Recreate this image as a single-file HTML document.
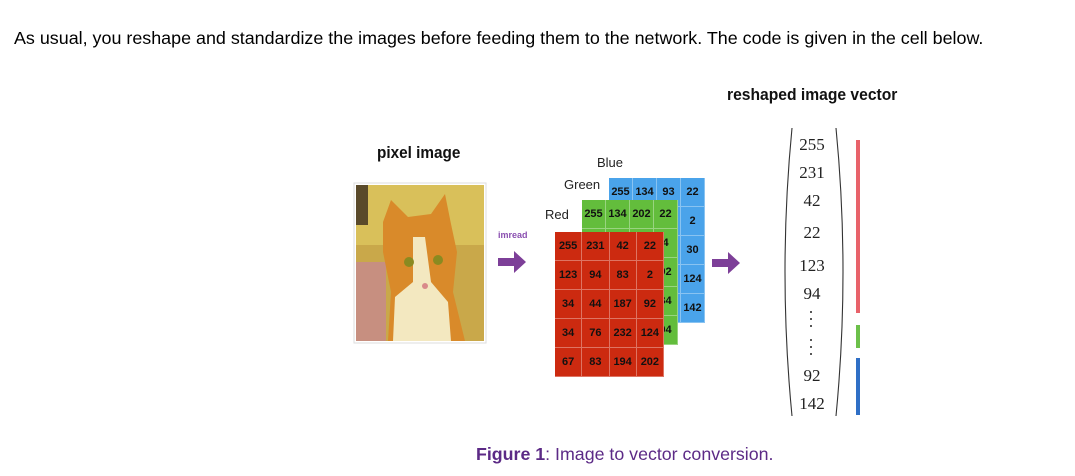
<!DOCTYPE html>
<html><head><style>
body{margin:0;width:1075px;height:476px;background:#fff;position:relative;font-family:"Liberation Sans",sans-serif;overflow:hidden}
.a{position:absolute;white-space:nowrap}
.g{position:absolute;display:grid;font-weight:bold;font-size:11px;color:#111}
.g div{display:flex;align-items:center;justify-content:center;border-right:1px solid rgba(255,255,255,.35);border-bottom:1px solid rgba(255,255,255,.35)}
.v{position:absolute;left:790px;width:44px;text-align:center;font-family:"Liberation Serif",serif;font-size:17px;color:#222}
.d{position:absolute;left:810px;width:2px;height:2px;background:#222;border-radius:1px}
</style></head><body>
<div class="a" style="left:14px;top:28px;font-size:17.9px;color:#000">As usual, you reshape and standardize the images before feeding them to the network. The code is given in the cell below.</div>
<div class="a" style="left:727px;top:85px;font-size:17px;font-weight:bold;color:#111;transform:scaleX(.92);transform-origin:left">reshaped image vector</div>
<div class="a" style="left:377px;top:143px;font-size:17px;font-weight:bold;color:#111;transform:scaleX(.9);transform-origin:left">pixel image</div>
<svg class="a" style="left:353px;top:182px" width="134" height="162">
<rect x="1" y="1" width="132" height="160" fill="#fff" stroke="#ddd"/>
<rect x="3" y="3" width="128" height="156" fill="#c9a84a"/>
<rect x="3" y="3" width="128" height="60" fill="#d9c05a"/>
<rect x="3" y="80" width="30" height="79" fill="#c78f80"/>
<rect x="3" y="3" width="12" height="40" fill="#5a4a2a"/>
<path d="M30 40 L38 18 L55 35 L78 32 L92 12 L98 42 L104 70 L100 110 L112 159 L35 159 L38 110 L30 70Z" fill="#d98a2a"/>
<path d="M60 55 L72 55 L78 100 L95 120 L98 159 L40 159 L42 115 L60 100Z" fill="#f3e8c0"/>
<circle cx="56" cy="80" r="5" fill="#8a8a20"/><circle cx="85" cy="78" r="5" fill="#8a8a20"/>
<circle cx="72" cy="104" r="3" fill="#d98a8a"/>
</svg>
<div class="a" style="left:498px;top:230px;font-size:9px;font-weight:bold;color:#8a4fb0">imread</div>
<svg class="a" style="left:498px;top:251px" width="30" height="22"><path d="M0 7h16V0l12 11-12 11v-7H0z" fill="#7d3f98"/></svg>
<svg class="a" style="left:712px;top:252px" width="30" height="22"><path d="M0 7h16V0l12 11-12 11v-7H0z" fill="#7d3f98"/></svg>
<div class="a" style="left:597px;top:155px;font-size:13px;color:#222">Blue</div>
<div class="a" style="left:564px;top:177px;font-size:13px;color:#222">Green</div>
<div class="a" style="left:545px;top:207px;font-size:13px;color:#222">Red</div>
<div class="g" style="left:609px;top:178px;width:96px;height:145px;background:#4aa3ea;grid-template-columns:repeat(4,1fr);grid-template-rows:repeat(5,1fr)">
<div>255</div><div>134</div><div>93</div><div>22</div><div></div><div></div><div></div><div>2</div><div></div><div></div><div></div><div>30</div><div></div><div></div><div></div><div>124</div><div></div><div></div><div></div><div>142</div></div>
<div class="g" style="left:582px;top:200px;width:96px;height:145px;background:#63bd3c;grid-template-columns:repeat(4,1fr);grid-template-rows:repeat(5,1fr)">
<div>255</div><div>134</div><div>202</div><div>22</div><div></div><div></div><div></div><div>4</div><div></div><div></div><div></div><div>92</div><div></div><div></div><div></div><div>34</div><div></div><div></div><div></div><div>94</div></div>
<div class="g" style="left:555px;top:232px;width:109px;height:145px;background:#cc2a10;grid-template-columns:repeat(4,1fr);grid-template-rows:repeat(5,1fr)">
<div>255</div><div>231</div><div>42</div><div>22</div><div>123</div><div>94</div><div>83</div><div>2</div><div>34</div><div>44</div><div>187</div><div>92</div><div>34</div><div>76</div><div>232</div><div>124</div><div>67</div><div>83</div><div>194</div><div>202</div></div>
<svg class="a" style="left:776px;top:126px" width="74" height="292"><path d="M16 2 Q2 146 16 290" fill="none" stroke="#333" stroke-width="1.1"/><path d="M60 2 Q74 146 60 290" fill="none" stroke="#333" stroke-width="1.1"/></svg>
<div class="v" style="top:135px">255</div>
<div class="v" style="top:163px">231</div>
<div class="v" style="top:191px">42</div>
<div class="v" style="top:223px">22</div>
<div class="v" style="top:256px">123</div>
<div class="v" style="top:284px">94</div>
<div class="d" style="top:311px"></div><div class="d" style="top:318px"></div><div class="d" style="top:325px"></div>
<div class="d" style="top:339px"></div><div class="d" style="top:346px"></div><div class="d" style="top:353px"></div>
<div class="v" style="top:366px">92</div>
<div class="v" style="top:394px">142</div>
<div class="a" style="left:856px;top:140px;width:4px;height:173px;background:#e8626a"></div>
<div class="a" style="left:856px;top:325px;width:4px;height:23px;background:#6cc04a"></div>
<div class="a" style="left:856px;top:358px;width:4px;height:57px;background:#2f6fc6"></div>
<div class="a" style="left:476px;top:444px;font-size:17.8px;color:#5c2a86"><b>Figure 1</b>: Image to vector conversion.</div>
</body></html>
